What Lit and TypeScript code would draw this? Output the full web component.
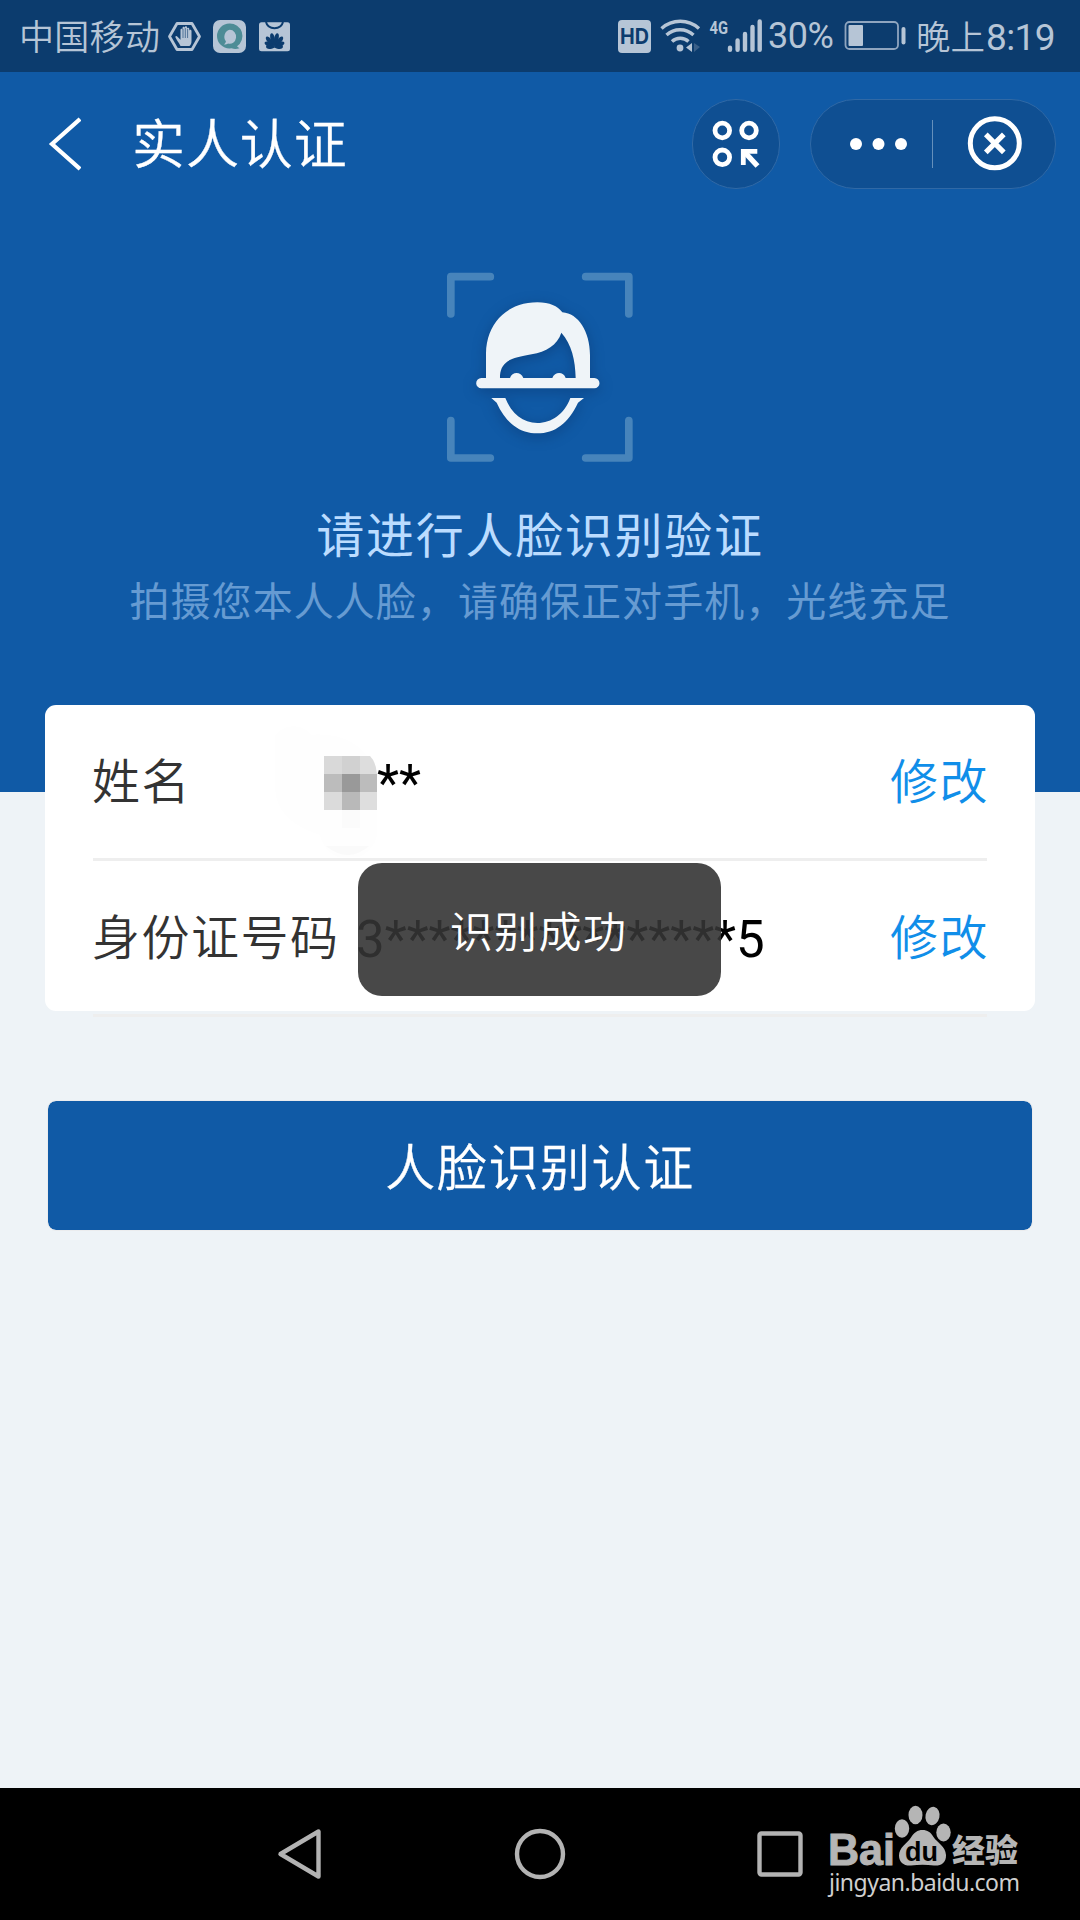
import { LitElement, html, css, svg } from "lit";
import { customElement, property } from "lit/decorators.js";

const FONT = css`"Roboto", "Noto Sans CJK SC", sans-serif`;

/** Flower petals: rotation in degrees and length in pixels. */
const PETALS = [
  [-84, 8.5], [-62, 11], [-37, 13.5], [-12, 14.5],
  [12, 14.5], [37, 13.5], [62, 11], [84, 8.5],
];

/** Android status bar: carrier, notification icons, signal, battery, clock. */
@customElement("status-bar")
class StatusBar extends LitElement {
  static styles = css`
    :host { display: flex; justify-content: space-between; height: 72px; box-sizing: border-box; padding: 0 25px 0 19px; background: #0c3c6e; color: #b6c5d6; font-family: ${FONT}; font-weight: 350; }
    .side { display: flex; align-items: center; height: 72px; }
    .carrier { font-size: 35px; line-height: 50px; letter-spacing: 0.3px; width: 147px; white-space: nowrap; margin-top: 6px; }
    .icons { display: block; width: 130px; height: 72px; }
    .signals { display: block; width: 150px; height: 72px; }
    .percent { font-size: 36px; line-height: 50px; font-weight: 400; width: 75px; white-space: nowrap; margin-top: -1px; letter-spacing: -0.5px; }
    .battery { display: block; width: 74px; height: 72px; }
    .clock { display: flex; align-items: center; width: 139px; margin-left: -1px; white-space: nowrap; font-size: 34.5px; line-height: 50px; margin-top: 3px; }
    .digits { font-size: 37px; font-weight: 400; letter-spacing: -0.6px; margin-left: 1px; }
    .hd { font: 700 21px "Inter", sans-serif; }
    .gen { font: 700 18px "Roboto", sans-serif; }
  `;
  render() {
    return html`
      <div class="side">
        <span class="carrier">中国移动</span>
        <svg class="icons" viewBox="166 0 130 72">
          <path d="M177 23.500h15l7.500 13-7.500 13h-15l-7.500-13z" fill="none" stroke="#b6c5d6" stroke-width="2.800" stroke-linejoin="round"/>
          <path d="M180.500 46c-2-4-4-6-5-8.500-.5-1.500 1-2 2-.8l3 3V30c0-1.600 2-1.600 2 0v-2c0-1.600 2.300-1.600 2.300 0v-.5c0-1.600 2.300-1.600 2.300 0v1.500c0-1.600 2.200-1.600 2.200 0v2c0-1.600 2.200-1.400 2.200 0v10c0 3-1 4-2 5z" fill="#b6c5d6"/>
          <path d="M183 29v9M185.300 28v10M187.600 29v9" stroke="#0c3c6e" stroke-width=".6"/>
          <rect x="213" y="20" width="33" height="33" rx="7" fill="#b6c5d6"/>
          <path d="M229.500 23.500a12.500 12.500 0 1 0 0 25l2-.2c3 1 5 .8 8 0-1-.5-2-1.200-2.500-2A12.500 12.500 0 0 0 229.500 23.500zm.3 6.300a6.300 7 0 1 1-1.800 13.700c-1 .8-3 1.200-4 1 1-.8 1.800-2 1.900-3.200A6.300 7 0 0 1 229.800 29.800z" fill="#4d8c96" fill-rule="evenodd"/>
          <rect x="259" y="22.300" width="31" height="29" rx="2.500" fill="#b6c5d6"/>
          <path d="M266 22c1 4 4 6.200 8.500 6.200s7.500-2.200 8.500-6.200" fill="none" stroke="#0c3c6e" stroke-width="2"/>
          <g fill="#0c3c6e">
            ${PETALS.map(
              ([angle, len]) => svg`<path transform="translate(274.500 47.500) rotate(${angle})" d="M0 0C-3.200 ${-len * 0.5} -2.600 ${-len} 0 ${-len}C2.600 ${-len} 3.200 ${-len * 0.5} 0 0Z"/>`
            )}
          </g>
        </svg>
      </div>
      <div class="side">
        <svg class="signals" viewBox="618 0 150 72">
          <rect x="618" y="20" width="33" height="33" rx="4" fill="#b6c5d6"/>
          <text class="hd" x="620" y="44" fill="#0c3c6e" textLength="29" lengthAdjust="spacingAndGlyphs">HD</text>
          <g fill="none" stroke="#b6c5d6" stroke-width="3.400">
            <path d="M661.500 28.500a28 28 0 0 1 37.500 0"/>
            <path d="M666.500 35a20 20 0 0 1 27 0"/>
            <path d="M672 41.500a12 12 0 0 1 16.500 0"/>
          </g>
          <circle cx="680" cy="48" r="3.400" fill="#b6c5d6"/>
          <path d="M692 43v9l-6-4.500z" fill="#b6c5d6"/>
          <path d="M694 43v9l6-5z" fill="#3a5f88"/>
          <text class="gen" x="709.500" y="33.500" fill="#b6c5d6" textLength="18.500" lengthAdjust="spacingAndGlyphs">4G</text>
          <g stroke="#b6c5d6" stroke-width="4.400" stroke-linecap="round">
            <path d="M730 47.800v2M737.600 40.500v9.300M745 34v15.800M752.500 27v22.800M759.700 21.500v28.300"/>
          </g>
        </svg>
        <span class="percent">30%</span>
        <svg class="battery" viewBox="842 0 74 72">
          <rect x="844.500" y="22" width="52.500" height="27" rx="4" fill="none" stroke="#8fa5bf" stroke-width="1.800"/>
          <rect x="847.500" y="25" width="14.500" height="21" rx="1" fill="#b6c5d6"/>
          <rect x="900.500" y="27" width="4" height="17.500" rx="2" fill="#b6c5d6"/>
        </svg>
        <span class="clock">晚上<span class="digits">8:19</span></span>
      </div>
    `;
  }
}

/** Page title with back arrow and mini-program capsule. */
@customElement("title-bar")
class TitleBar extends LitElement {
  static styles = css`
    :host { display: flex; align-items: center; height: 144px; box-sizing: border-box; padding: 0 24px 0 47px; color: #fff; font-family: ${FONT}; }
    .back { display: block; width: 34px; height: 54px; margin-right: 51px; }
    .title { flex: 1; font-size: 53px; line-height: 72px; letter-spacing: 0.9px; font-weight: 350; padding-top: 4px; -webkit-text-stroke: 0.3px #fff; }
    .round { width: 88px; height: 90px; box-sizing: border-box; border: 1px solid #3069a6; border-radius: 45px; background: #0f4f92; margin-right: 30px; }
    .capsule { width: 246px; height: 90px; box-sizing: border-box; border: 1px solid #3069a6; border-radius: 45px; background: #0f4f92; }
    .glyph { display: block; }
  `;
  render() {
    return html`
      <svg class="back" viewBox="0 0 34 54"><path d="M33 2 5 27l28 25" fill="none" stroke="#fff" stroke-width="4.200"/></svg>
      <span class="title">实人认证</span>
      <div class="round">
        <svg class="glyph" width="86" height="88" viewBox="693 100 86 88">
          <g fill="none" stroke="#fff" stroke-width="4.800">
            <circle cx="722.300" cy="130.500" r="7.300"/><circle cx="749" cy="130.500" r="7.300"/><circle cx="722.300" cy="157.300" r="7.300"/>
            <path d="M743.300 165v-13.700h14"/><path d="m744 151.500 13.500 14.500" stroke-width="5.400"/>
          </g>
        </svg>
      </div>
      <div class="capsule">
        <svg class="glyph" width="244" height="88" viewBox="811 100 244 88">
          <g fill="#fff"><circle cx="856" cy="144" r="6"/><circle cx="878.500" cy="144" r="6"/><circle cx="901" cy="144" r="6"/></g>
          <path d="M932.500 120v48" stroke="#6590bb"/>
          <circle cx="994.800" cy="143.300" r="24.500" fill="none" stroke="#fff" stroke-width="5"/>
          <path d="m985.800 134.300 18 18m0-18-18 18" stroke="#fff" stroke-width="5.200"/>
        </svg>
      </div>
    `;
  }
}

/** Face-scan illustration with its heading and hint. */
@customElement("face-hero")
class FaceHero extends LitElement {
  static styles = css`
    :host { display: flex; flex-direction: column; align-items: center; padding-top: 34px; font-family: ${FONT}; }
    .face { display: block; width: 240px; height: 230px; }
    .head { filter: drop-shadow(0 10px 20px rgba(5, 40, 90, 0.4)); }
    .heading { margin-top: 22px; font-size: 48px; line-height: 70px; letter-spacing: 1.7px; color: #bbdcff; white-space: nowrap; }
    .hint { font-size: 40px; line-height: 60px; letter-spacing: 1.05px; color: #669bd2; white-space: nowrap; margin-top: 1px; }
  `;
  render() {
    return html`
      <svg class="face" viewBox="0 0 720 690">
        <g fill="none" stroke="#4784bb" stroke-width="23" stroke-linecap="round" stroke-linejoin="round">
          <path d="M92.500 192V80H211M497 80H626.500V192M92.500 512V624H211M497 624H626.500V512"/>
        </g>
        <g class="head" fill="#eff4f8">
          <path fill-rule="evenodd" d="M198 384V310C200 215 265 157 352 157C390 157 412 168 427 187C475 190 510 245 510 315V384H523A15.500 15.500 0 0 1 523 415H184A15.500 15.500 0 0 1 184 384ZM240 384H270C276 364 303 364 310 384H397C404 364 431 364 437 384H467C466 330 455 283 424 248C412 285 378 306 335 313C270 324 240 335 240 384Z"/>
          <path d="M214 444H256C275 492 310 519 352 519C395 519 433 492 451 444H492L474 458C445 520 405 550 352 550C300 550 258 520 230 458Z"/>
        </g>
      </svg>
      <div class="heading">请进行人脸识别验证</div>
      <div class="hint">拍摄您本人人脸，请确保正对手机，光线充足</div>
    `;
  }
}

/** One label / value / edit line of the identity card. */
@customElement("info-row")
class InfoRow extends LitElement {
  @property() label = "";
  @property() value = "";
  @property({ type: Boolean }) masked = false;
  static styles = css`
    :host { display: flex; align-items: center; height: 156px; box-sizing: border-box; border-bottom: 3px solid #eee; font-family: ${FONT}; font-size: 48px; white-space: nowrap; }
    .label { width: 264px; margin-left: -1px; color: #333; letter-spacing: 1.5px; font-weight: 350; padding-bottom: 7px; }
    .label.short { width: 136px; }
    .value { flex: 1; display: flex; align-items: center; color: #000; font-size: 51px; padding-top: 3px; }
    .edit { color: #108ee9; font-weight: 350; letter-spacing: 1.5px; margin-right: -2px; padding-bottom: 7px; }
    .mosaic { display: block; width: 149px; height: 148px; }
  `;
  render() {
    return html`
      <span class="label ${this.masked ? "short" : ""}">${this.label}</span>
      <span class="value">
        ${this.masked
          ? html`<svg class="mosaic" viewBox="228 709 149 148">
              <path d="M275 735a27 32 0 0 1 37 0c35-4 65 18 65 50v40a28 28 0 0 1-57 10c-30-10-45-25-45-50z" fill="#fefefe"/>
              <g>
                <path d="M324 756h18v18h-18z" fill="#d9d9d9"/><path d="M342 756h18v18h-18z" fill="#d1d1d1"/>
                <path d="M324 774h18v18h-18z" fill="#bcbcbc"/><path d="M342 774h18v18h-18z" fill="#999"/><path d="M360 774h17v18h-17z" fill="#bcbcbc"/>
                <path d="M324 792h18v18h-18z" fill="#dbdbdb"/><path d="M342 792h18v18h-18z" fill="#b9b9b9"/><path d="M360 792h17v18h-17z" fill="#dedede"/>
                <path d="M342 810h18v18h-18z" fill="#fbfbfb"/>
              </g>
              <path d="M360 756h10q6 6 7 18h-17z" fill="#ddd"/>
              <path d="M326 846h43q-21 18-43 0z" fill="#fafafa"/>
            </svg>`
          : null}${this.value}
      </span>
      <span class="edit">修改</span>
    `;
  }
}

/** System navigation keys with the site mark on the right. */
@customElement("nav-bar")
class NavBar extends LitElement {
  static styles = css`
    :host { display: block; height: 132px; background: #000; }
    .keys { display: block; }
    .latin { font: 700 44px "Liberation Sans", sans-serif; }
    .du { font: 700 28px "Liberation Sans", sans-serif; }
    .cn { font: 900 32px "Noto Sans CJK SC", sans-serif; }
    .url { font: 400 23px "Noto Sans", sans-serif; }
  `;
  render() {
    return html`
      <svg class="keys" width="1080" height="132" viewBox="0 1788 1080 132">
        <g fill="none" stroke="#b3b3b3" stroke-width="4.400" stroke-linejoin="round">
          <path d="M280.500 1854 318.500 1831.500V1876.500Z"/>
          <circle cx="540" cy="1854" r="23"/>
          <rect x="759.500" y="1833.500" width="41" height="41" rx="2"/>
        </g>
        <g fill="#b5b5b5">
          <text class="latin" x="828" y="1864.500" textLength="67" lengthAdjust="spacingAndGlyphs" stroke="#b5b5b5">Bai</text>
          <ellipse cx="902" cy="1828.500" rx="7.200" ry="9.200"/>
          <ellipse cx="915.500" cy="1815" rx="7" ry="9.300"/>
          <ellipse cx="932.500" cy="1816" rx="7" ry="9.200" transform="rotate(12 932.500 1816)"/>
          <ellipse cx="943.500" cy="1832.500" rx="7.200" ry="9"/>
          <path d="M922.500 1830c5 0 8 2 11 7 4 6 12 9 12.500 18 .3 8-5 11-12 10.500-8-1-15-1-23 0-7 .5-12-3-12-10 0-8 8-12 12-18 3-5 6.500-7.500 11.500-7.500z"/>
          <text class="du" x="905" y="1860.500" fill="#000" textLength="33" lengthAdjust="spacingAndGlyphs">du</text>
          <text class="cn" x="952" y="1861.500" textLength="66" lengthAdjust="spacingAndGlyphs">经验</text>
          <text class="url" x="829" y="1891" fill="#cfcfcf" textLength="191">jingyan.baidu.com</text>
        </g>
      </svg>
    `;
  }
}

@customElement("app-root")
class AppRoot extends LitElement {
  static styles = css`
    :host { display: flex; flex-direction: column; position: relative; width: 1080px; height: 1920px; overflow: hidden; background: #eef3f7; font-family: ${FONT}; }
    .top { height: 720px; flex: none; background: #105aa6; }
    .body { flex: 1; padding: 0 45px; margin-top: -87px; }
    .card { height: 306px; box-sizing: border-box; border-radius: 11px; background: #fff; padding: 0 48px; }
    .submit { display: flex; align-items: center; justify-content: center; box-sizing: border-box; height: 131px; width: 986px; margin: 89px 2px 0; border: 1px solid #ebecee; border-radius: 9px; background: #105aa6; background-clip: padding-box; color: #fff; font-family: inherit; font-size: 50px; font-weight: 350; letter-spacing: 1.6px; padding: 0 0 3px; -webkit-text-stroke: 0.3px #fff; }
    .toast { position: absolute; left: 358px; top: 863px; width: 363px; height: 133px; display: flex; align-items: center; justify-content: center; box-sizing: border-box; border-radius: 24px; background: rgba(52, 52, 52, 0.9); color: #fff; font-size: 43px; font-weight: 350; letter-spacing: 1.4px; padding: 0 2px 1px 0; }
  `;
  render() {
    return html`
      <status-bar></status-bar>
      <div class="top">
        <title-bar></title-bar>
        <face-hero></face-hero>
      </div>
      <div class="body">
        <div class="card">
          <info-row label="姓名" value="**" masked></info-row>
          <info-row label="身份证号码" value="3****************5"></info-row>
        </div>
        <button class="submit">人脸识别认证</button>
      </div>
      <nav-bar></nav-bar>
      <div class="toast">识别成功</div>
    `;
  }
}
